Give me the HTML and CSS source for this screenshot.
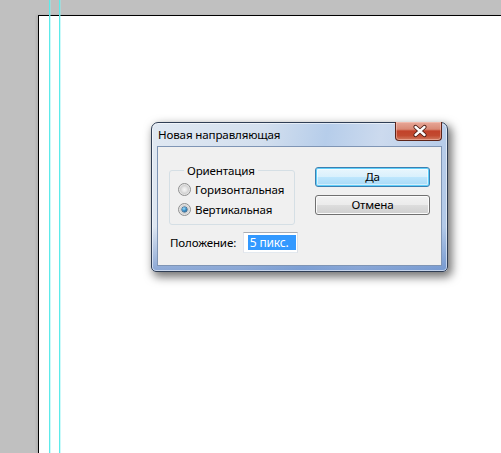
FILE: index.html
```html
<!DOCTYPE html>
<html lang="ru">
<head>
<meta charset="utf-8">
<title>Новая направляющая</title>
<link rel="stylesheet" href="styles.css">
</head>
<body>
<div class="workspace">
  <div class="document"></div>
  <div class="guide guide-a"></div>
  <div class="guide guide-b"></div>

  <div class="dialog">
    <div class="titlebar">
      <span class="title">Новая направляющая</span>
      <div class="close">
        <svg width="47" height="19" viewBox="0 0 47 19">
          <path d="M19.5 5 L28.5 13 M28.5 5 L19.5 13" stroke="#4a1a12" stroke-width="4.2" stroke-linecap="round"/>
          <path d="M19.5 5 L28.5 13 M28.5 5 L19.5 13" stroke="#ffffff" stroke-width="2.4" stroke-linecap="round"/>
        </svg>
      </div>
    </div>

    <div class="client">
      <fieldset class="group">
        <legend>Ориентация</legend>
        <label class="radio"><span class="dot"></span>Горизонтальная</label>
        <label class="radio checked"><span class="dot"></span>Вертикальная</label>
      </fieldset>

      <div class="buttons">
        <button class="btn btn-default">Да</button>
        <button class="btn">Отмена</button>
      </div>

      <div class="position">
        <span class="position-label">Положение:</span>
        <div class="field"><div class="selection">15 пикс.</div></div>
      </div>
    </div>
  </div>
</div>
</body>
</html>
```

FILE: styles.css
```css
html, body {
  margin: 0;
  padding: 0;
}

body {
  background: #c0c0c0;
  font-family: "Noto Sans", "Open Sans", "DejaVu Sans", sans-serif;
  font-size: 11.6px;
  letter-spacing: -0.15px;
  color: #000;
}

/* Workspace: gray pasteboard with the white document */
.workspace {
  position: relative;
  width: 501px;
  height: 453px;
  overflow: hidden;
  box-sizing: border-box;
  padding: 15px 0 0 38px;
}

.document {
  width: 100%;
  height: 100%;
  box-sizing: border-box;
  background: #fff;
  border-left: 1px solid #000;
  border-top: 1px solid #000;
  box-shadow: -2px 0 2px rgba(0, 0, 0, 0.08);
}

/* Vertical guides run through the whole window */
.guide {
  position: absolute;
  top: 0;
  bottom: 0;
  width: 1px;
  background: #5ceaea;
  box-shadow: 1px 0 0 rgba(140, 245, 245, 0.45);
}
.guide-a { left: 49px; }
.guide-b { left: 59px; }

/* Dialog window */
.dialog {
  position: absolute;
  left: 151px;
  top: 122px;
  width: 297px;
  height: 150px;
  box-sizing: border-box;
  display: flex;
  flex-direction: column;
  padding: 0 5px 5px 5px;
  border: 1px solid #2f3e55;
  border-radius: 7px 7px 5px 5px;
  background:
    linear-gradient(to bottom, rgba(255,255,255,0) 0%, rgba(255,255,255,0) 70%, rgba(70,115,190,0.55) 100%),
    linear-gradient(100deg, #e0e8f2 0%, #d3dfee 35%, #b6cdea 55%, #ccdaee 72%, #afc7e7 100%);
  box-shadow:
    inset 0 0 0 1px rgba(255, 255, 255, 0.55),
    3px 4px 10px 1px rgba(0, 0, 0, 0.55);
}

.titlebar {
  height: 23px;
  display: flex;
  justify-content: space-between;
  align-items: flex-start;
}

.title {
  align-self: center;
  padding-left: 1px;
  line-height: 16px;
  color: #000;
}

.close {
  width: 47px;
  height: 19px;
  margin-top: -1px;
  box-sizing: border-box;
  border: 1px solid #5c2419;
  border-top: none;
  border-radius: 0 0 4px 4px;
  background: linear-gradient(to bottom, #e7a899 0%, #d98a76 40%, #c2422a 50%, #c24a30 75%, #d27a5f 100%);
  box-shadow: inset 0 0 0 1px rgba(255, 210, 200, 0.45);
}
.close svg { display: block; }

/* Client area */
.client {
  flex: 1;
  box-sizing: border-box;
  background: #f0f0f0;
  border: 1px solid #7f95b5;
  display: grid;
  grid-template-columns: 126px 115px;
  grid-template-rows: auto auto;
  column-gap: 20px;
  align-content: start;
  padding: 16px 0 0 11px;
}

.group {
  margin: 0;
  padding: 1px 0 5px 8px;
  border: 1px solid #d5dfe5;
  border-radius: 3px;
  min-width: 0;
}

.group legend {
  margin-left: 6px;
  padding: 0 3px;
  line-height: 15px;
}

.radio {
  display: flex;
  align-items: center;
  height: 20px;
  white-space: nowrap;
}

.dot {
  position: relative;
  width: 13px;
  height: 13px;
  margin-right: 4px;
  box-sizing: border-box;
  border-radius: 50%;
  border: 1px solid #8e8f8f;
  background: radial-gradient(circle at 50% 50%, #f6f6f6 0, #e9e9e9 2px, #d2d2d2 4px, #f4f4f4 6px);
}

.checked .dot::after {
  content: "";
  position: absolute;
  left: 3px;
  top: 3px;
  width: 5px;
  height: 5px;
  border-radius: 50%;
  background: radial-gradient(circle at 40% 35%, #9fe0fb 0, #3a8fc8 45%, #0e3f6b 100%);
  box-shadow: 0 0 0 0.5px #1d4f7a;
}

/* Push buttons */
.buttons {
  display: flex;
  flex-direction: column;
  gap: 8px;
  margin-top: 4px;
}

.btn {
  width: 115px;
  height: 20px;
  padding: 0;
  font: inherit;
  letter-spacing: inherit;
  line-height: 16px;
  color: #000;
  border: 1px solid #707070;
  border-radius: 3px;
  background: linear-gradient(to bottom, #f2f2f2 0%, #ebebeb 50%, #dddddd 51%, #cfcfcf 100%);
  box-shadow: inset 0 0 0 1px #fbfbfb;
}

.btn-default {
  border-color: #3c7fb1;
  background: linear-gradient(to bottom, #eaf6fd 0%, #d9f0fc 50%, #bee6fd 51%, #a7d9f5 100%);
  box-shadow: inset 0 0 0 1px #5fd0fb, inset 0 0 0 2px rgba(255, 255, 255, 0.5);
}

/* Position input */
.position {
  grid-column: 1 / -1;
  display: flex;
  align-items: center;
  margin-top: 7px;
  padding-left: 1px;
}

.position-label {
  width: 73px;
  white-space: nowrap;
}

.field {
  width: 55px;
  height: 21px;
  box-sizing: border-box;
  padding: 2px 0 0 4px;
  background: #fff;
  border: 1px solid;
  border-color: #abadb3 #dbdfe6 #e3e9ef #e2e3ea;
}

.selection {
  width: 48px;
  height: 15px;
  line-height: 15px;
  overflow: hidden;
  white-space: nowrap;
  text-indent: -5px;
  background: #3399ff;
  color: #fff;
  font-size: 12px;
}
```
